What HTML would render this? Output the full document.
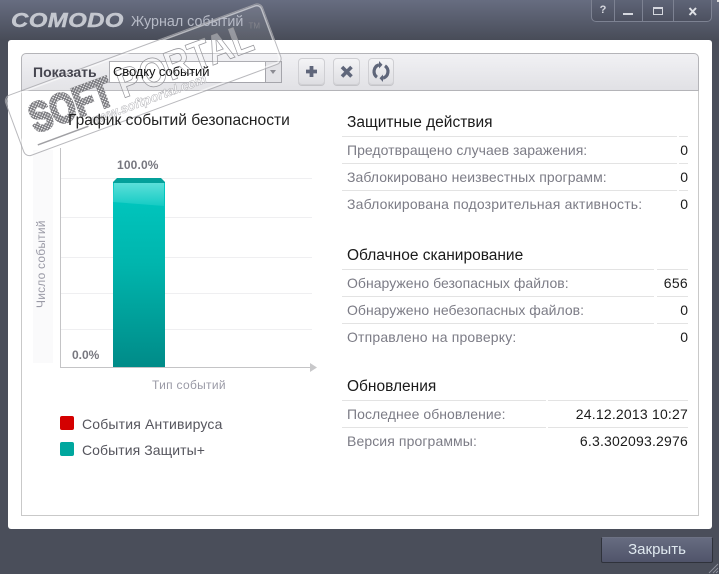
<!DOCTYPE html>
<html lang="ru"><head><meta charset="utf-8"><title>Журнал событий</title>
<style>
*{box-sizing:border-box}
html,body{margin:0;padding:0}
body{width:719px;height:574px;overflow:hidden;position:relative;background:#4a4e5a;font-family:"Liberation Sans",sans-serif}
.a{position:absolute;white-space:nowrap}
.z{z-index:5}
#top{left:0;top:0;width:719px;height:40px;background:linear-gradient(#676d81,#484c58)}
#panel{left:8px;top:40px;width:704px;height:489px;background:#fff;border-radius:3px}
#box{left:21px;top:54px;width:678px;height:462px;border:1px solid #c9c9c9;border-top:0;border-radius:5px 5px 0 0}
#bar{left:21px;top:53px;width:678px;height:38px;background:linear-gradient(#f1f1f4,#e1e1e5);border:1px solid #b4b4b8;border-radius:5px 5px 0 0}
.tb{top:58px;width:27px;height:27px;border:1px solid #cfcfd3;border-radius:4px;background:linear-gradient(#f4f4f6,#dedee2);box-shadow:0 1px 0 #c4c4c8}
.tb svg{position:absolute;left:0;top:0}
.h{font-size:15.5px;color:#1a1a1a;left:347px;line-height:18px}
.l{font-size:14px;color:#7c7c86;left:347px;line-height:16px}
.v{font-size:14px;color:#1c1c1c;right:31px;line-height:16px}
.ln{height:1px;background:#e3e3e3}
.g{left:61px;width:251px;height:1px;background:#efeff1}
</style></head><body>
<div class="a" id="top"></div>
<div class="a" style="left:717px;top:0;width:2px;height:2px;background:#ddd"></div>

<div class="a z" style="left:11px;top:5.500px;font:italic bold 20px/30px 'Liberation Sans',sans-serif;color:#c4c7cf;letter-spacing:.3px;transform:scaleX(1.2);transform-origin:0 0;-webkit-text-stroke:.4px #c4c7cf">COMODO</div>
<div class="a z" style="left:131px;top:13px;font-size:14.300px;line-height:18px;color:#b6bac6">Журнал событий</div>

<div class="a" style="left:591px;top:-2px;width:121px;height:24px;border:1px solid #7d8292;border-radius:0 0 5px 5px;background:linear-gradient(#5f6578,#4d5160)"></div>
<div class="a" style="left:614px;top:0;width:1px;height:21px;background:#7d8292"></div>
<div class="a" style="left:642px;top:0;width:1px;height:21px;background:#7d8292"></div>
<div class="a" style="left:673px;top:0;width:1px;height:21px;background:#7d8292"></div>
<div class="a" style="left:598px;top:4px;width:10px;text-align:center;font:bold 11px/14px 'Liberation Mono',monospace;color:#d5d7de">?</div>
<div class="a" style="left:623px;top:13px;width:10px;height:2px;background:#d5d7de"></div>
<div class="a" style="left:653px;top:7px;width:10px;height:8px;border:1px solid #d5d7de;border-top-width:2px"></div>
<svg class="a" style="left:688px;top:7px" width="10" height="9"><path d="M1.500 1L8 8M8 1L1.500 8" stroke="#dfe1e6" stroke-width="2" fill="none"/></svg>

<div class="a" id="panel"></div>
<div class="a" id="box"></div>
<div class="a" id="bar"></div>
<div class="a z" style="left:33px;top:64px;font-size:14px;font-weight:bold;line-height:16px;color:#45454f">Показать</div>
<div class="a" style="left:109px;top:61px;width:173px;height:22px;background:#fff;border:1px solid #a5a5ab"></div>
<div class="a" style="left:265px;top:62px;width:16px;height:20px;background:#e2e2e6;border-left:1px solid #a5a5ab"></div>
<svg class="a" style="left:270px;top:70px" width="7" height="5"><path d="M0 0H6L3 4Z" fill="#8b8b92"/></svg>
<div class="a z" style="left:113px;top:64px;font-size:13px;line-height:16px;color:#111;letter-spacing:-.1px">Сводку событий</div>
<div class="a tb" style="left:298px"><svg width="25" height="25"><path d="M12.500 7V18M7 12.500H18" stroke="#5f667a" stroke-width="3.800" fill="none"/></svg></div>
<div class="a tb" style="left:333px"><svg width="25" height="25"><path d="M8 8L17.500 17.500M17.500 8L8 17.500" stroke="#5f667a" stroke-width="3.600" fill="none"/></svg></div>
<div class="a tb" style="left:368px;width:26px"><svg width="24" height="25"><path d="M8 18.200A7 7 0 0 1 10 5.800" stroke="#5f667a" stroke-width="3.200" fill="none"/><path d="M16 6.800A7 7 0 0 1 14 19.200" stroke="#5f667a" stroke-width="3.200" fill="none"/><path d="M10 2L13.500 5.800L10 9.500ZM14 15.500L10.500 19.200L14 23Z" fill="#5f667a"/></svg></div>

<!-- chart -->
<div class="a z" style="left:68px;top:112px;font-size:15.600px;line-height:18px;color:#222">График событий безопасности</div>
<div class="a" style="left:33px;top:150px;width:20px;height:213px;background:#fafafb"></div>
<div class="a g" style="top:178px"></div>
<div class="a g" style="top:217px"></div>
<div class="a g" style="top:257px"></div>
<div class="a g" style="top:293px"></div>
<div class="a g" style="top:329px"></div>
<div class="a" style="left:60px;top:148px;width:1px;height:220px;background:#c4c4c6"></div>
<div class="a" style="left:60px;top:367px;width:251px;height:1px;background:#c4c4c6"></div>
<svg class="a" style="left:310px;top:363px" width="8" height="9"><path d="M0 0L7 4.500L0 9Z" fill="#c8c8ca"/></svg>
<svg class="a" style="left:113px;top:177px" width="53" height="190">
<defs><linearGradient id="bg" x1="0" y1="0" x2="0" y2="1"><stop offset="0" stop-color="#00c9c1"/><stop offset=".45" stop-color="#00b5ad"/><stop offset="1" stop-color="#008b88"/></linearGradient>
<linearGradient id="gl" x1="0" y1="0" x2="0" y2="1"><stop offset="0" stop-color="#5cdfd9"/><stop offset="1" stop-color="#14cbc4"/></linearGradient></defs>
<rect x="0" y="5" width="52" height="185" fill="url(#bg)"/>
<path d="M0 5L4 1H48L52 5V6H0Z" fill="#04a09a"/>
<path d="M1 6H51V29L0 25Z" fill="url(#gl)"/>
</svg>
<div class="a" style="left:117px;top:158px;font-size:12px;font-weight:bold;line-height:14px;color:#77777f;letter-spacing:.15px">100.0%</div>
<div class="a" style="left:72px;top:348px;font-size:12px;font-weight:bold;line-height:14px;color:#77777f">0.0%</div>
<div class="a" style="left:152px;top:378px;font-size:12px;line-height:14px;color:#9a9aa6;letter-spacing:.3px">Тип событий</div>
<div class="a" style="left:34px;top:308px;font-size:12px;line-height:14px;color:#9a9aa6;letter-spacing:.2px;transform-origin:0 0;transform:rotate(-90deg)">Число событий</div>
<div class="a" style="left:60px;top:416px;width:14px;height:14px;border-radius:2px;background:#d40000"></div>
<div class="a" style="left:60px;top:442px;width:14px;height:14px;border-radius:2px;background:#00a79e"></div>
<div class="a" style="left:82px;top:416px;font-size:14px;line-height:16px;color:#55555d;letter-spacing:.17px">События Антивируса</div>
<div class="a" style="left:82px;top:442px;font-size:14px;line-height:16px;color:#55555d;letter-spacing:.07px">События Защиты+</div>

<!-- right -->
<div class="a h" style="top:114px">Защитные действия</div>
<div class="a ln" style="left:342px;top:136px;width:335px"></div><div class="a ln" style="left:679px;top:136px;width:9px"></div>
<div class="a l" style="top:142px;letter-spacing:.03px">Предотвращено случаев заражения:</div><div class="a v" style="top:142px">0</div>
<div class="a ln" style="left:342px;top:163px;width:335px"></div><div class="a ln" style="left:679px;top:163px;width:9px"></div>
<div class="a l" style="top:169px;letter-spacing:.06px">Заблокировано неизвестных программ:</div><div class="a v" style="top:169px">0</div>
<div class="a ln" style="left:342px;top:190px;width:335px"></div><div class="a ln" style="left:679px;top:190px;width:9px"></div>
<div class="a l" style="top:196px;letter-spacing:.17px">Заблокирована подозрительная активность:</div><div class="a v" style="top:196px">0</div>

<div class="a h" style="top:247px">Облачное сканирование</div>
<div class="a ln" style="left:342px;top:269px;width:312px"></div><div class="a ln" style="left:657px;top:269px;width:31px"></div>
<div class="a l" style="top:275px;letter-spacing:.03px">Обнаружено безопасных файлов:</div><div class="a v" style="top:275px;letter-spacing:.3px">656</div>
<div class="a ln" style="left:342px;top:296px;width:312px"></div><div class="a ln" style="left:657px;top:296px;width:31px"></div>
<div class="a l" style="top:302px;letter-spacing:.03px">Обнаружено небезопасных файлов:</div><div class="a v" style="top:302px">0</div>
<div class="a ln" style="left:342px;top:323px;width:312px"></div><div class="a ln" style="left:657px;top:323px;width:31px"></div>
<div class="a l" style="top:329px;letter-spacing:.17px">Отправлено на проверку:</div><div class="a v" style="top:329px">0</div>

<div class="a h" style="top:378px">Обновления</div>
<div class="a ln" style="left:342px;top:400px;width:204px"></div><div class="a ln" style="left:548px;top:400px;width:140px"></div>
<div class="a l" style="top:406px;letter-spacing:.05px">Последнее обновление:</div><div class="a v" style="top:406px;letter-spacing:.2px">24.12.2013 10:27</div>
<div class="a ln" style="left:342px;top:427px;width:204px"></div><div class="a ln" style="left:548px;top:427px;width:140px"></div>
<div class="a l" style="top:433px;letter-spacing:.1px">Версия программы:</div><div class="a v" style="top:433px;letter-spacing:.2px">6.3.302093.2976</div>

<!-- close -->
<div class="a" style="left:601px;top:537px;width:112px;height:26px;border:1px solid #2f323b;border-top-color:#6d7284;border-radius:2px;background:linear-gradient(#666c80,#50546a);color:#dfe8ef;font-size:15px;line-height:24px;text-align:center">Закрыть</div>
<svg class="a" style="left:708px;top:563px" width="11" height="11"><path d="M1 10L10 1M5 10L10 5M8 10L10 8" stroke="#8d919c" fill="none"/></svg>

<!-- watermark -->
<svg class="a" style="left:0;top:0;z-index:2" width="300" height="170">
<defs>
<pattern id="dots" width="3.600" height="3.600" patternUnits="userSpaceOnUse"><circle cx="1.800" cy="1.800" r="1.300" fill="#fff" stroke="#6f6f74" stroke-width="1"/></pattern>
<mask id="softm" maskUnits="userSpaceOnUse" x="0" y="0" width="130" height="64"><text x="18" y="45" font-family="Liberation Sans" font-weight="bold" font-size="41" textLength="86" lengthAdjust="spacingAndGlyphs" fill="#fff" stroke="#fff" stroke-width="3">SOFT</text></mask>
</defs>
<g transform="translate(3 97) rotate(-20.300)">
<rect x=".5" y=".5" width="274" height="64" rx="6" fill="#fff" fill-opacity=".1" stroke="#a8a8ac" stroke-opacity=".8" stroke-width="1"/>
<rect x="2" y="2" width="271" height="61" rx="5" fill="none" stroke="#fff" stroke-opacity=".55" stroke-width="1.500"/>
<rect x="0" y="0" width="130" height="64" fill="url(#dots)" mask="url(#softm)"/>
<text x="112" y="43" font-family="Liberation Sans" font-weight="bold" font-size="41" textLength="142" lengthAdjust="spacingAndGlyphs" fill="#fff" fill-opacity=".35" stroke="#97979c" stroke-width=".8">PORTAL</text>
<text x="72" y="57" font-family="Liberation Sans" font-weight="bold" font-style="italic" font-size="13" textLength="125" lengthAdjust="spacingAndGlyphs" fill="#fff" fill-opacity=".6" stroke="#a5a5aa" stroke-width=".4">www.softportal.com</text>
<path d="M16 57H70" stroke="#a0a0a4" stroke-width="1.500"/>
<text x="254" y="21" font-family="Liberation Sans" font-size="8" fill="#8a8a90" fill-opacity=".8" transform="rotate(20.300 254 21)">TM</text>
</g></svg>
</body></html>
